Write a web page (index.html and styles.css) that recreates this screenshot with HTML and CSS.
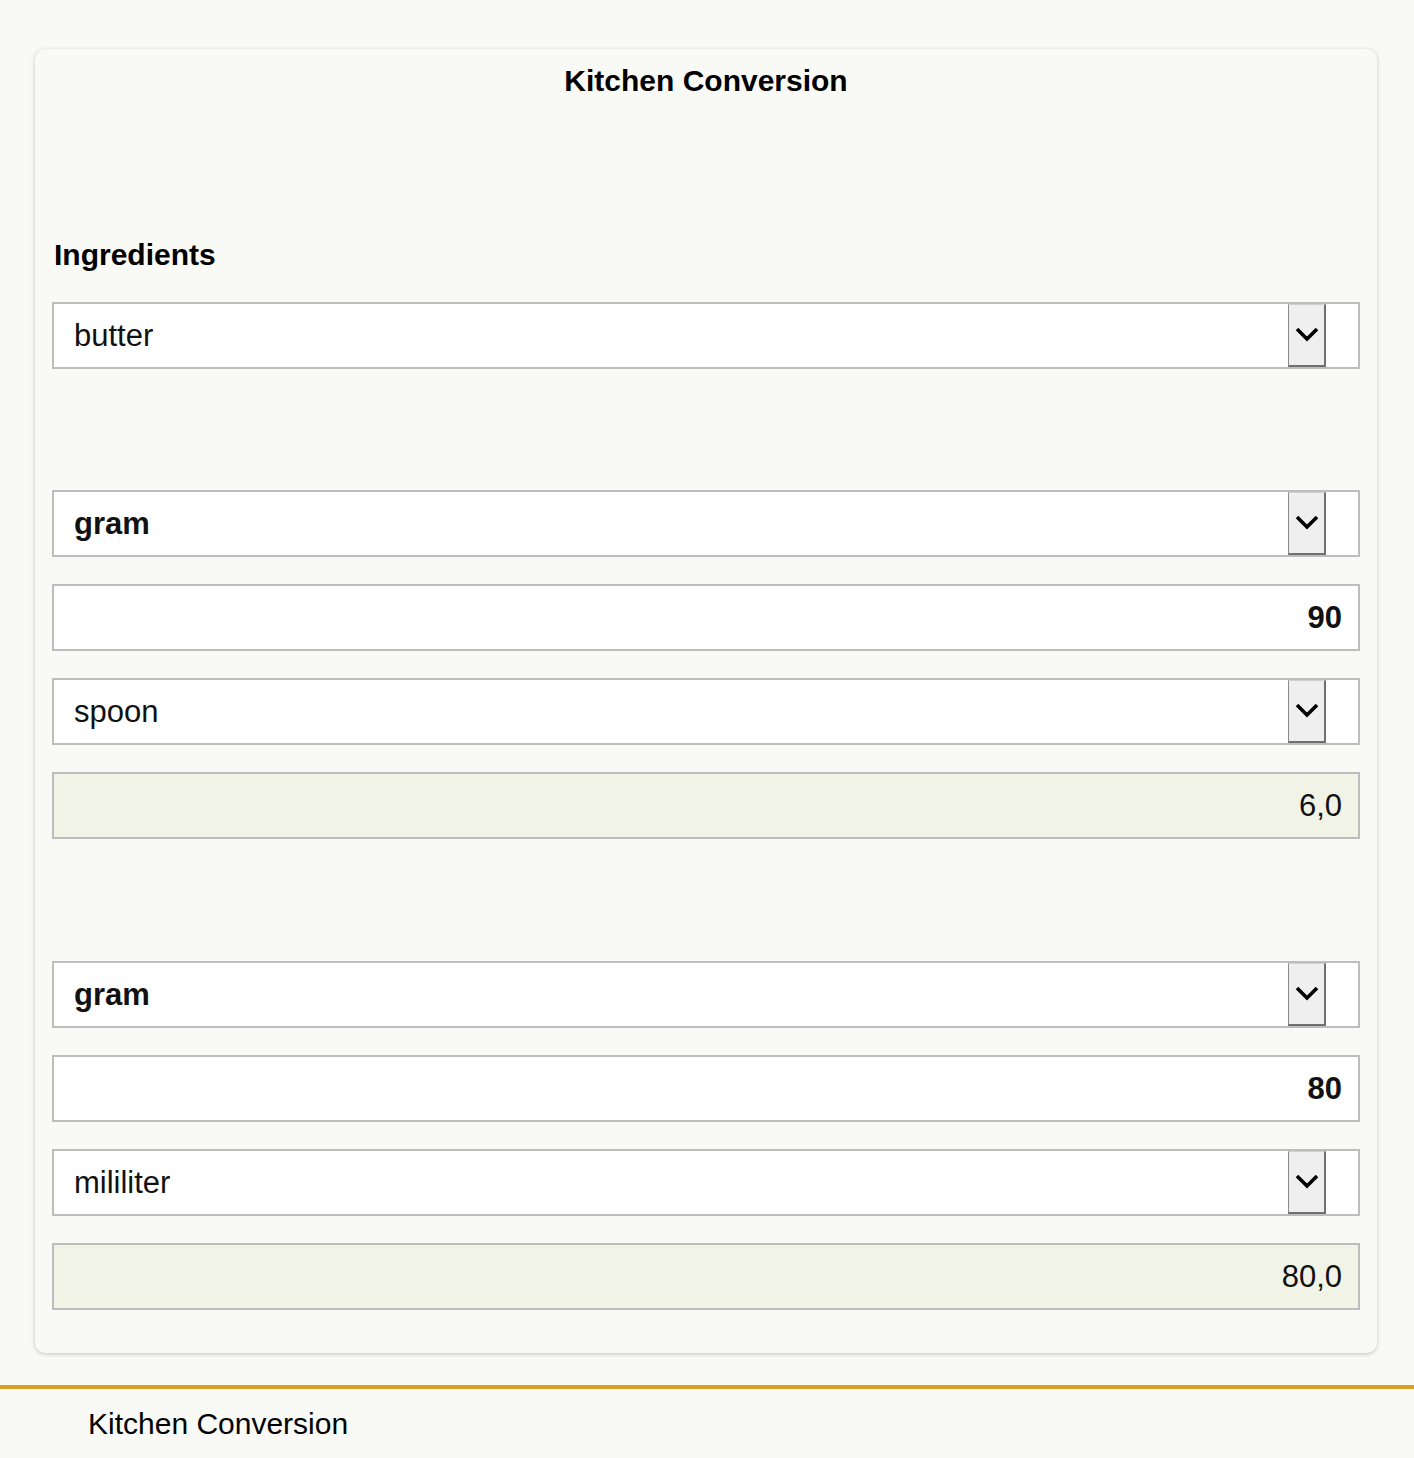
FILE: index.html
```html
<!DOCTYPE html>
<html lang="en">
<head>
<meta charset="utf-8">
<title>Kitchen Conversion</title>
<link rel="stylesheet" href="styles.css">
</head>
<body>
<main class="card">
  <h1 class="title">Kitchen Conversion</h1>
  <h2 class="label">Ingredients</h2>
  <div class="field select"><span class="value">butter</span><span class="arrow"><svg viewBox="0 0 24 16" width="24" height="16"><path d="M2 3 L12 13 L22 3" fill="none" stroke="#000" stroke-width="3.6"/></svg></span></div>

  <div class="group">
    <div class="field select"><span class="value strong">gram</span><span class="arrow"><svg viewBox="0 0 24 16" width="24" height="16"><path d="M2 3 L12 13 L22 3" fill="none" stroke="#000" stroke-width="3.6"/></svg></span></div>
    <div class="field number"><span class="value strong">90</span></div>
    <div class="field select"><span class="value">spoon</span><span class="arrow"><svg viewBox="0 0 24 16" width="24" height="16"><path d="M2 3 L12 13 L22 3" fill="none" stroke="#000" stroke-width="3.6"/></svg></span></div>
    <div class="field number readonly"><span class="value">6,0</span></div>
  </div>

  <div class="group">
    <div class="field select"><span class="value strong">gram</span><span class="arrow"><svg viewBox="0 0 24 16" width="24" height="16"><path d="M2 3 L12 13 L22 3" fill="none" stroke="#000" stroke-width="3.6"/></svg></span></div>
    <div class="field number"><span class="value strong">80</span></div>
    <div class="field select"><span class="value">mililiter</span><span class="arrow"><svg viewBox="0 0 24 16" width="24" height="16"><path d="M2 3 L12 13 L22 3" fill="none" stroke="#000" stroke-width="3.6"/></svg></span></div>
    <div class="field number readonly"><span class="value">80,0</span></div>
  </div>
</main>
<footer class="footer">Kitchen Conversion</footer>
</body>
</html>
```

FILE: styles.css
```css
html, body {
  margin: 0;
  padding: 0;
  background: #f9f9f5;
  font-family: "Liberation Sans", Arial, sans-serif;
  color: #111;
}

body {
  padding-top: 49px;
  min-height: 1458px;
  box-sizing: border-box;
}

.card {
  display: block;
  margin: 0 37px 0 35px;
  padding: 14px 17px 43px 17px;
  border-radius: 10px;
  background: #f9f9f5;
  box-shadow: 0 1px 4px rgba(0, 0, 0, 0.22);
}

.title {
  margin: 0;
  font-size: 30px;
  line-height: 35px;
  font-weight: bold;
  text-align: center;
  color: #000;
}

.label {
  margin: 139px 0 30px 2px;
  font-size: 30px;
  line-height: 35px;
  font-weight: bold;
  color: #000;
}

.group {
  display: flex;
  flex-direction: column;
  gap: 27px;
  margin-top: 121px;
}

.group + .group {
  margin-top: 122px;
}

.field {
  display: flex;
  align-items: center;
  box-sizing: border-box;
  height: 67px;
  border: 2px solid #bdbdbd;
  background: #fff;
  font-size: 31px;
  line-height: 36px;
  padding: 0 16px 0 20px;
}

.field.number {
  justify-content: flex-end;
}

.field.readonly {
  background: #f2f3e7;
}

.field.select {
  padding-right: 32px;
}

.value {
  white-space: nowrap;
}

.value.strong {
  font-weight: bold;
}

.arrow {
  margin-left: auto;
  align-self: stretch;
  width: 38px;
  box-sizing: border-box;
  background: #efefef;
  border-left: 1px solid #8a8a8a;
  border-right: 2px solid #707070;
  border-bottom: 2px solid #707070;
  border-top: 1px solid #d0d0d0;
  display: flex;
  align-items: center;
  justify-content: center;
  padding-bottom: 2px;
}

.arrow svg {
  display: block;
}

.footer {
  margin-top: 32px;
  border-top: 4px solid #d6a020;
  padding: 17px 0 0 88px;
  font-size: 30px;
  line-height: 35px;
  color: #000;
}
```
